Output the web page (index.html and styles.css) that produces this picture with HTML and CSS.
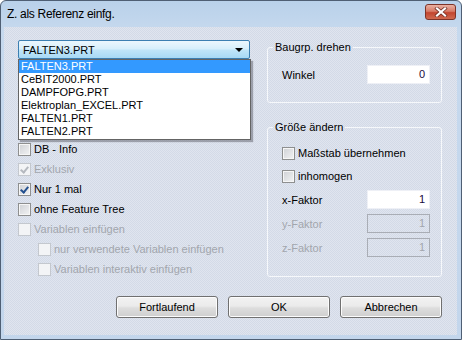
FILE: index.html
```html
<!DOCTYPE html>
<html>
<head>
<meta charset="utf-8">
<link rel="stylesheet" href="styles.css">
</head>
<body>
<div class="window">
  <div class="titlebar">
    <span class="title">Z. als Referenz einfg.</span>
    <span class="close">
      <svg width="14" height="10" viewBox="0 0 14 10">
        <path d="M3 1.5 L11 8.5 M11 1.5 L3 8.5" stroke="#6b2a20" stroke-width="3.6" stroke-linecap="square"/>
        <path d="M3 1.5 L11 8.5 M11 1.5 L3 8.5" stroke="#fff" stroke-width="2.2" stroke-linecap="square"/>
      </svg>
    </span>
  </div>
  <div class="client">
    <div class="columns">
      <div class="left">
        <div class="combo">
          <span>FALTEN3.PRT</span>
          <span class="arrow"></span>
        </div>
        <!-- open dropdown list, lies over the checkboxes -->
        <ul class="droplist">
          <li class="sel">FALTEN3.PRT</li>
          <li>CeBIT2000.PRT</li>
          <li>DAMPFOPG.PRT</li>
          <li>Elektroplan_EXCEL.PRT</li>
          <li>FALTEN1.PRT</li>
          <li>FALTEN2.PRT</li>
        </ul>
        <div class="checks">
          <div class="check"><span class="box"></span>DB - Info</div>
          <div class="check off"><span class="box on"></span>Exklusiv</div>
          <div class="check"><span class="box on"></span>Nur 1 mal</div>
          <div class="check"><span class="box"></span>ohne Feature Tree</div>
          <div class="check off"><span class="box"></span>Variablen einfügen</div>
          <div class="check off sub"><span class="box"></span>nur verwendete Variablen einfügen</div>
          <div class="check off sub"><span class="box"></span>Variablen interaktiv einfügen</div>
        </div>
      </div>
      <div class="right">
        <fieldset class="group rotate">
          <legend>Baugrp. drehen</legend>
          <div class="field"><span>Winkel</span><span class="input">0</span></div>
        </fieldset>
        <fieldset class="group scale">
          <legend>Größe ändern</legend>
          <div class="check"><span class="box"></span>Maßstab übernehmen</div>
          <div class="check"><span class="box"></span>inhomogen</div>
          <div class="factors">
            <div class="field"><span>x-Faktor</span><span class="input">1</span></div>
            <div class="field off"><span>y-Faktor</span><span class="input">1</span></div>
            <div class="field off"><span>z-Faktor</span><span class="input">1</span></div>
          </div>
        </fieldset>
      </div>
    </div>
    <div class="buttons">
      <span class="btn">Fortlaufend</span>
      <span class="btn">OK</span>
      <span class="btn">Abbrechen</span>
    </div>
  </div>
</div>
</body>
</html>
```

FILE: styles.css
```css
body {
    margin: 0;
    font-family: "Liberation Sans", Arial, sans-serif;
    font-size: 11px;
    color: #000;
}

.window {
    width: 462px;
    height: 340px;
    box-sizing: border-box;
    border: 1px solid #4f5f74;
    border-radius: 6px 6px 0 0;
    background: linear-gradient(#b9d1ea, #c6d9ee 30px, #c3d6ec);
    display: flex;
    flex-direction: column;
}

.titlebar {
    height: 26px;
    display: flex;
    justify-content: space-between;
    align-items: flex-start;
    padding: 3px 5px 0 6px;
    box-sizing: border-box;
}

.title {
    font-size: 12px;
    letter-spacing: -0.3px;
    line-height: 20px;
}

.close {
    width: 31px;
    height: 16px;
    box-sizing: border-box;
    border: 1px solid #7d3328;
    border-radius: 3px;
    background: linear-gradient(#e9b1a3, #d77a66 45%, #c2452f 55%, #cf6a50);
    display: flex;
    align-items: center;
    justify-content: center;
}

.client {
    flex: 1;
    margin: 0 4px 4px 3px;
    padding: 13px 15px 0 14px;
    background: repeating-conic-gradient(#d3dae7 0 25%, #e0e5ef 0 50%) 0 0 / 2px 2px;
}

.columns {
    display: grid;
    grid-template-columns: 233px 175px;
    column-gap: 16px;
}

.left {
    position: relative;
}

.combo {
    width: 232px;
    height: 19px;
    box-sizing: border-box;
    border: 1px solid #3c7fb1;
    border-radius: 2px;
    background: linear-gradient(#ecf7fd, #d7effb 45%, #bfe5f8 55%, #a7d9f5);
    display: flex;
    align-items: center;
    justify-content: space-between;
    padding: 0 6px 0 4px;
}

.arrow {
    width: 0;
    height: 0;
    border-left: 4px solid transparent;
    border-right: 4px solid transparent;
    border-top: 4px solid #000;
}

.droplist {
    position: absolute;
    top: 19px;
    left: 0;
    width: 233px;
    margin: 0;
    padding: 0;
    list-style: none;
    box-sizing: border-box;
    border: 1px solid #646464;
    background: #fff;
    box-shadow: 2px 2px 1px rgba(80, 80, 90, 0.45);
}

.droplist li {
    height: 13px;
    line-height: 13px;
    padding-left: 2px;
}

.droplist li:last-child {
    height: 14px;
}

.droplist .sel {
    background: #3399ff;
    color: #fff;
}

.checks {
    margin-top: 80px;
}

.check {
    height: 20px;
    display: flex;
    align-items: center;
    gap: 3px;
}

.check.sub {
    padding-left: 20px;
}

.off {
    color: #a2a6ad;
}

.box {
    width: 13px;
    height: 13px;
    box-sizing: border-box;
    border: 1px solid #8e8f8f;
    background: linear-gradient(135deg, #cfd1d5, #f2f3f4);
    box-shadow: inset 0 0 0 1px #f6f6f6;
    position: relative;
}

.off .box {
    border-color: #c4c8ce;
    background: #f3f4f6;
    box-shadow: none;
}

.box.on::after {
    content: "";
    position: absolute;
    left: 3px;
    top: 1px;
    width: 3px;
    height: 6px;
    border-right: 2px solid #23508f;
    border-bottom: 2px solid #23508f;
    transform: rotate(40deg);
}

.off .box.on::after {
    border-color: #b5b9bf;
}

.group {
    margin: 0;
    padding: 0 11px 18px 14px;
    border: 1px solid #f6f8fb;
    border-radius: 3px;
}

.group legend {
    padding: 0 2px;
    margin-left: -9px;
    line-height: 13px;
}

.rotate {
    margin-top: 1px;
}

.rotate .field {
    margin-top: 11px;
}

.scale {
    margin-top: 18px;
    padding-top: 9px;
    padding-bottom: 19px;
}

.scale .check {
    margin-bottom: 3px;
}

.factors {
    margin-top: 4px;
    display: flex;
    flex-direction: column;
    gap: 5px;
}

.field {
    display: flex;
    align-items: center;
    justify-content: space-between;
}

.input {
    width: 63px;
    height: 19px;
    box-sizing: border-box;
    border: 1px solid #eef0f6;
    background: #fff;
    text-align: right;
    line-height: 17px;
    padding-right: 4px;
}

.field:not(.off) .input {
    color: #1a0a40;
}

.off .input {
    background: transparent;
    border-color: #a9adb5;
    color: #a2a6ad;
}

.buttons {
    margin-top: 17px;
    display: flex;
    justify-content: flex-end;
    gap: 10px;
}

.btn {
    width: 102px;
    height: 22px;
    box-sizing: border-box;
    border: 1px solid #707070;
    border-radius: 3px;
    background: linear-gradient(#f2f2f2, #ebebeb 45%, #dddddd 55%, #cfcfcf);
    box-shadow: inset 0 0 0 1px #fcfcfc;
    display: flex;
    align-items: center;
    justify-content: center;
}
```
